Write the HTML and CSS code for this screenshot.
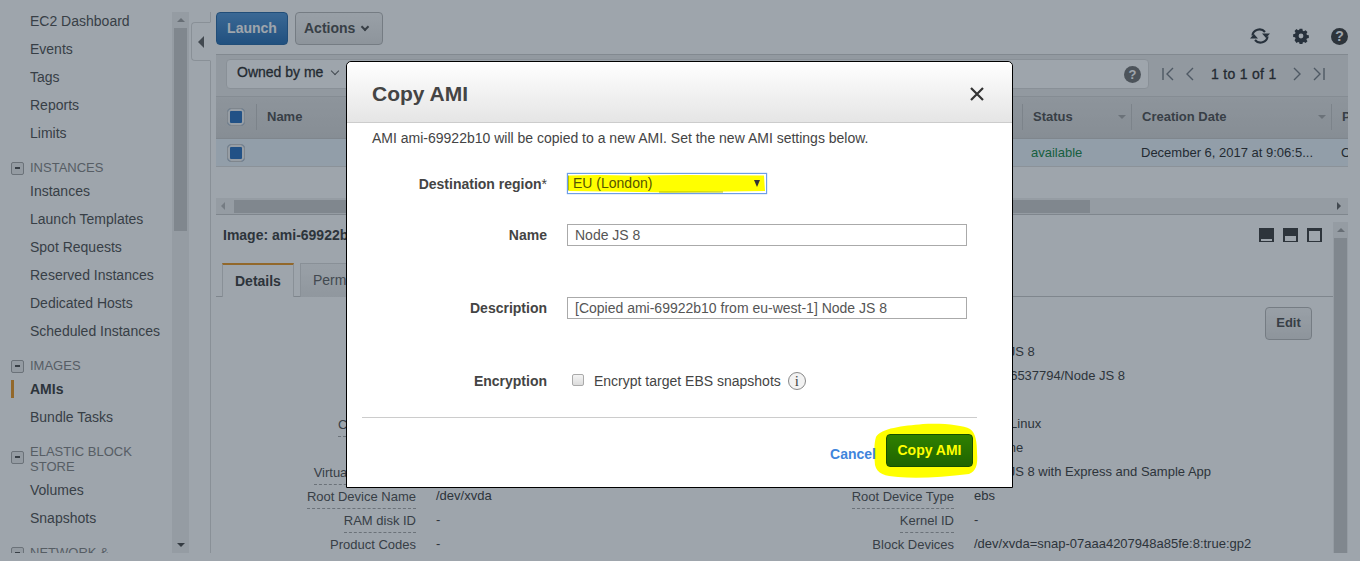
FILE: index.html
```html
<!DOCTYPE html>
<html lang="en">
<head>
    <meta charset="UTF-8">
    <meta name="viewport" content="width=device-width, initial-scale=1.0">
    <title>Copy AMI</title>
    <link rel="stylesheet" href="styles.css">
</head>
<body>
    <div class="console">
        <!-- left navigation -->
        <aside class="sidebar">
            <nav class="nav">
                <a class="nav-item">EC2 Dashboard</a>
                <a class="nav-item">Events</a>
                <a class="nav-item">Tags</a>
                <a class="nav-item">Reports</a>
                <a class="nav-item">Limits</a>
                <h3 class="nav-heading"><span class="nav-toggle"></span>INSTANCES</h3>
                <a class="nav-item">Instances</a>
                <a class="nav-item">Launch Templates</a>
                <a class="nav-item">Spot Requests</a>
                <a class="nav-item">Reserved Instances</a>
                <a class="nav-item">Dedicated Hosts</a>
                <a class="nav-item">Scheduled Instances</a>
                <h3 class="nav-heading"><span class="nav-toggle"></span>IMAGES</h3>
                <a class="nav-item active">AMIs</a>
                <a class="nav-item">Bundle Tasks</a>
                <h3 class="nav-heading"><span class="nav-toggle"></span>ELASTIC BLOCK STORE</h3>
                <a class="nav-item">Volumes</a>
                <a class="nav-item">Snapshots</a>
                <h3 class="nav-heading"><span class="nav-toggle"></span>NETWORK &amp; SECURITY</h3>
            </nav>
            <div class="vscroll vscroll-nav">
                <span class="arrow-up"></span>
                <span class="vscroll-thumb"></span>
                <span class="arrow-down"></span>
            </div>
        </aside>

        <div class="collapser">
            <div class="collapser-tab"><span class="arrow-left"></span></div>
        </div>

        <main class="main">
            <div class="toolbar">
                <button class="btn btn-primary">Launch</button>
                <button class="btn btn-actions">Actions <span class="caret"></span></button>
                <div class="toolbar-icons">
                    <svg class="icon-refresh" width="22" height="20" viewBox="0 0 22 20">
                        <path d="M3.500 9.500a7 6.500 0 0 1 12.500-3.500" fill="none" stroke="#3a3f45" stroke-width="2.200"/>
                        <path d="M18.500 10.500a7 6.500 0 0 1-12.500 3.500" fill="none" stroke="#3a3f45" stroke-width="2.200"/>
                        <path d="M13 7.500h8l-4 4.500zM9 12.500H1l4-4.500z" fill="#3a3f45"/>
                    </svg>
                    <svg class="icon-gear" width="16" height="16" viewBox="0 0 18 18">
                        <path fill="#3a3f45" fill-rule="evenodd" d="M7.300 0h3.400l.5 2.400 1.500.6 2-1.300 2.400 2.400-1.300 2 .6 1.500 2.400.5v3.400l-2.400.5-.6 1.500 1.300 2-2.400 2.400-2-1.300-1.500.6-.5 2.400H7.300l-.5-2.400-1.500-.6-2 1.300L.9 14.200l1.300-2-.6-1.500L-.8 10.200V6.800l2.400-.5.6-1.500-1.300-2L3.300 .4l2 1.300 1.500-.6zM9 6a3 3 0 1 0 0 6 3 3 0 0 0 0-6z" transform="translate(.9 .9) scale(.9)"/>
                    </svg>
                    <span class="help help-lg">?</span>
                </div>
            </div>

            <div class="filter-bar">
                <div class="search-box">
                    <span class="owned">Owned by me <span class="chevron"></span></span>
                    <span class="help help-sm">?</span>
                </div>
                <div class="pager">
                    <svg width="14" height="14" viewBox="0 0 14 14"><path d="M2 1v12M12 1L6 7l6 6" fill="none" stroke="#7b8187" stroke-width="1.400"/></svg>
                    <svg width="10" height="14" viewBox="0 0 10 14"><path d="M8 1L2 7l6 6" fill="none" stroke="#7b8187" stroke-width="1.400"/></svg>
                    <span class="pager-text">1 to 1 of 1</span>
                    <svg width="10" height="14" viewBox="0 0 10 14"><path d="M2 1l6 6-6 6" fill="none" stroke="#7b8187" stroke-width="1.400"/></svg>
                    <svg width="14" height="14" viewBox="0 0 14 14"><path d="M12 1v12M2 1l6 6-6 6" fill="none" stroke="#7b8187" stroke-width="1.400"/></svg>
                </div>
            </div>

            <div class="table">
                <div class="table-row table-head">
                    <div class="cell cell-check"><span class="checkbox"></span></div>
                    <div class="cell">Name</div>
                    <div class="cell">Status<span class="sort"></span></div>
                    <div class="cell">Creation Date<span class="sort"></span></div>
                    <div class="cell">Platform</div>
                </div>
                <div class="table-row table-selected">
                    <div class="cell cell-check"><span class="checkbox"></span></div>
                    <div class="cell"></div>
                    <div class="cell status-ok">available</div>
                    <div class="cell cell-wide">December 6, 2017 at 9:06:5...</div>
                    <div class="cell cell-wide">Other Linux</div>
                </div>
            </div>
            <div class="hscroll">
                <span class="arrow-left arrow-small"></span>
                <span class="hscroll-thumb"></span>
                <span class="arrow-right arrow-small"></span>
            </div>

            <section class="detail-pane">
                <div class="detail-content">
                    <div class="detail-title">
                        <strong>Image: ami-69922b10</strong>
                        <div class="pane-icons">
                            <span class="pane-icon pane-low"></span>
                            <span class="pane-icon pane-mid"></span>
                            <span class="pane-icon pane-high"></span>
                        </div>
                    </div>
                    <div class="tabs">
                        <span class="tab tab-active">Details</span>
                        <span class="tab">Permissions</span>
                    </div>
                    <div class="edit-row"><button class="btn btn-edit">Edit</button></div>
                    <div class="info-row"><span class="info-label"><i>AMI ID</i></span><span class="info-value">ami-69922b10</span><span class="info-label"><i>AMI Name</i></span><span class="info-value">Node JS 8</span></div>
                    <div class="info-row"><span class="info-label"><i>Owner</i></span><span class="info-value"></span><span class="info-label"><i>Source</i></span><span class="info-value">000006537794/Node JS 8</span></div>
                    <div class="info-row"><span class="info-label"><i>Status</i></span><span class="info-value"></span><span class="info-label"><i>State Reason</i></span><span class="info-value">-</span></div>
                    <div class="info-row"><span class="info-label"><i>Creation date</i></span><span class="info-value"></span><span class="info-label"><i>Platform</i></span><span class="info-value">Other Linux</span></div>
                    <div class="info-row"><span class="info-label"><i>Architecture</i></span><span class="info-value"></span><span class="info-label"><i>Image Type</i></span><span class="info-value">machine</span></div>
                    <div class="info-row"><span class="info-label"><i>Virtualization type</i></span><span class="info-value"></span><span class="info-label"><i>Description</i></span><span class="info-value">Node JS 8 with Express and Sample App</span></div>
                    <div class="info-row"><span class="info-label"><i>Root Device Name</i></span><span class="info-value">/dev/xvda</span><span class="info-label"><i>Root Device Type</i></span><span class="info-value">ebs</span></div>
                    <div class="info-row"><span class="info-label"><i>RAM disk ID</i></span><span class="info-value">-</span><span class="info-label"><i>Kernel ID</i></span><span class="info-value">-</span></div>
                    <div class="info-row"><span class="info-label"><i>Product Codes</i></span><span class="info-value">-</span><span class="info-label"><i>Block Devices</i></span><span class="info-value">/dev/xvda=snap-07aaa4207948a85fe:8:true:gp2</span></div>
                </div>
                <div class="vscroll vscroll-pane">
                    <span class="arrow-up"></span>
                    <span class="vscroll-thumb"></span>
                    <span class="arrow-down"></span>
                </div>
            </section>
        </main>
    </div>

    <div class="overlay"></div>

    <div class="modal">
        <div class="modal-header">
            <h2>Copy AMI</h2>
            <svg class="modal-close" width="16" height="16" viewBox="0 0 16 16"><path d="M2 2l12 12M14 2L2 14" fill="none" stroke="#333" stroke-width="2.200"/></svg>
        </div>
        <div class="modal-body">
            <p class="intro">AMI ami-69922b10 will be copied to a new AMI. Set the new AMI settings below.</p>
            <div class="form-row form-row-first">
                <label>Destination region<em>*</em></label>
                <div class="select">
                    <svg class="marker" width="198" height="19" viewBox="0 0 198 19">
                        <path d="M1 1.500L30 1L60 1.500L120 1L196 1.500L197 17L160 17.500L100 18.500L40 17.500L1 17z" fill="#ffff00"/>
                        <path d="M0 1.500h1v15H0zM91 17.500h64v1H91z" fill="#b4c000"/>
                    </svg>
                    <span class="select-value">EU (London)</span>
                    <span class="select-arrow"></span>
                </div>
            </div>
            <div class="form-row form-row-name">
                <label>Name</label>
                <input class="text-input" type="text" value="Node JS 8">
            </div>
            <div class="form-row form-row-desc">
                <label>Description</label>
                <input class="text-input" type="text" value="[Copied ami-69922b10 from eu-west-1] Node JS 8">
            </div>
            <div class="form-row form-row-enc">
                <label>Encryption</label>
                <div class="encrypt">
                    <span class="tick-box"></span>
                    <span>Encrypt target EBS snapshots</span>
                    <span class="info-icon">i</span>
                </div>
            </div>
        </div>
        <div class="modal-footer">
            <a class="cancel">Cancel</a>
            <div class="copy-wrap">
                <svg class="marker-blob" width="106" height="56" viewBox="0 0 106 56">
                    <path d="M3 14C8 5 30 3 50 1C70 0 90 2 97 6C103 10 104 20 104 30C105 42 103 48 96 51C70 54 45 56 25 54C12 53 4 51 2 42C1 30 1 20 3 14z" fill="#ffff00"/>
                </svg>
                <button class="btn-copy">Copy AMI</button>
            </div>
        </div>
    </div>
</body>
</html>
```

FILE: styles.css
```css
* {
    box-sizing: border-box;
}
html, body {
    height: 100%;
}
body {
    margin: 0;
    height: 561px;
    overflow: hidden;
    background-color: #ffffff;
    font-family: "Liberation Sans", Arial, sans-serif;
    font-size: 14px;
    color: #555;
}
.console {
    display: flex;
    height: 553px;
    padding-top: 12px;
    overflow: hidden;
}

/* sidebar */
.sidebar {
    display: flex;
    flex: none;
    width: 189px;
    height: 541px;
}
.nav {
    width: 172px;
    height: 541px;
    margin: 0;
    overflow: hidden;
}
.nav-item {
    display: block;
    height: 28px;
    line-height: 28px;
    padding-left: 30px;
    position: relative;
    top: -5px;
    color: #555;
}
.nav-item.active {
    font-weight: bold;
    color: #444;
}
.nav-item.active::before {
    content: "";
    position: absolute;
    left: 11px;
    top: 5px;
    width: 3px;
    height: 18px;
    background-color: #ec9a28;
}
.nav-heading {
    display: block;
    position: relative;
    top: -5px;
    margin: 0;
    padding: 13px 30px 2px 30px;
    font-size: 13px;
    line-height: 15px;
    font-weight: normal;
    color: #888;
}
.nav-toggle {
    position: absolute;
    left: 11px;
    top: 15px;
    width: 13px;
    height: 13px;
    border: 1px solid #aaa;
    border-radius: 2px;
    background-color: #eee;
}
.nav-toggle::after {
    content: "";
    position: absolute;
    left: 3px;
    top: 4px;
    width: 5px;
    height: 2px;
    background-color: #555;
}
.nav-heading:nth-last-of-type(2) .nav-toggle {
    top: 20px;
}

/* scrollbars */
.vscroll {
    display: flex;
    flex-direction: column;
    align-items: center;
    flex: none;
    width: 17px;
    background-color: #f1f1f1;
}
.vscroll-nav {
    height: 541px;
}
.vscroll-thumb {
    flex: none;
    width: 13px;
    height: 203px;
    margin-top: 6px;
    background-color: #cdcdcd;
}
.arrow-up, .arrow-down {
    flex: none;
    width: 0;
    height: 0;
    border-left: 4px solid transparent;
    border-right: 4px solid transparent;
}
.arrow-up {
    margin-top: 6px;
    border-bottom: 4px solid #a3a3a3;
}
.arrow-down {
    margin-top: auto;
    margin-bottom: 6px;
    border-top: 4px solid #505050;
}

/* collapse handle */
.collapser {
    flex: none;
    width: 22px;
    padding-left: 2px;
    border-right: 1px solid #ddd;
}
.collapser-tab {
    display: flex;
    align-items: center;
    justify-content: center;
    width: 20px;
    height: 39px;
    margin-top: 10px;
    background-color: #fff;
    border: 1px solid #ddd;
    border-right: 1px solid #fff;
    border-radius: 4px 0 0 4px;
}
.arrow-left {
    display: block;
    width: 0;
    height: 0;
    border-top: 6px solid transparent;
    border-bottom: 6px solid transparent;
    border-right: 6px solid #666;
}
.arrow-right {
    display: block;
    width: 0;
    height: 0;
    border-top: 4px solid transparent;
    border-bottom: 4px solid transparent;
    border-left: 4px solid #666;
}
.arrow-small {
    border-top-width: 4px;
    border-bottom-width: 4px;
    border-right-width: 4px;
    border-right-color: #bbb;
}

/* main column */
.main {
    flex: none;
    width: 1132px;
    height: 541px;
    margin-left: 5px;
    display: flex;
    flex-direction: column;
}
.toolbar {
    display: flex;
    align-items: flex-start;
    flex: none;
    height: 43px;
    border-bottom: 1px solid #d0d0d0;
}
.btn {
    height: 33px;
    padding: 0 0 2px;
    font-family: inherit;
    font-size: 14px;
    font-weight: bold;
    white-space: nowrap;
    border-radius: 4px;
    border: 1px solid #bbb;
    background: linear-gradient(#f7f7f7, #e4e4e4);
    color: #444;
}
.btn-primary {
    width: 72px;
    color: #fff;
    border-color: #2f6da8;
    background: linear-gradient(#5a9ad8, #2f72b4);
}
.btn-actions {
    width: 88px;
    margin-left: 7px;
    padding-left: 8px;
    text-align: left;
    color: #555;
}
.caret {
    display: inline-block;
    width: 6px;
    height: 6px;
    margin: 0 0 3px 3px;
    border-right: 2px solid #555;
    border-bottom: 2px solid #555;
    transform: rotate(45deg);
}
.toolbar-icons {
    display: flex;
    align-items: center;
    gap: 22px;
    margin: 14px 0 0 auto;
}
.help {
    display: inline-block;
    border-radius: 50%;
    background-color: #444;
    color: #fff;
    font-weight: bold;
    text-align: center;
}
.help-lg {
    width: 17px;
    height: 17px;
    line-height: 17px;
    font-size: 14px;
}
.help-sm {
    width: 17px;
    height: 17px;
    line-height: 17px;
    font-size: 13px;
    background-color: #777;
}

/* filter bar */
.filter-bar {
    display: flex;
    align-items: flex-start;
    flex: none;
    height: 42px;
    padding: 4px 0 0 10px;
    background-color: #ebebeb;
    border-bottom: 1px solid #d5d5d5;
}
.search-box {
    display: flex;
    align-items: center;
    justify-content: space-between;
    width: 923px;
    height: 30px;
    padding: 0 7px 0 10px;
    background-color: #fff;
    border: 1px solid #ddd;
    border-radius: 4px;
}
.owned {
    margin-bottom: 4px;
    color: #333;
    font-size: 14px;
    -webkit-text-stroke: .3px #333;
}
.chevron {
    display: inline-block;
    width: 6px;
    height: 6px;
    margin: 0 0 3px 5px;
    border-right: 1.500px solid #666;
    border-bottom: 1.500px solid #666;
    transform: rotate(45deg);
}
.pager {
    display: flex;
    align-items: center;
    gap: 10px;
    height: 30px;
    margin-left: 12px;
}
.pager-text {
    margin: 0 5px 0 6px;
    color: #333;
    letter-spacing: .3px;
    -webkit-text-stroke: .3px #333;
}

/* table */
.table {
    flex: none;
    height: 102px;
    overflow: hidden;
    font-size: 13px;
}
.table-row {
    display: grid;
    grid-template-columns: 40px 766px 109px 200px 1fr;
}
.table-head {
    height: 42px;
    align-items: center;
    padding-bottom: 1px;
    background: linear-gradient(#e4e4e4, #d8d8d8);
    border-bottom: 1px solid #ccc;
    font-weight: bold;
    color: #555;
}
.table-selected {
    height: 28px;
    align-items: center;
    background-color: #ebf4fb;
    border-bottom: 1px solid #e0e0e0;
    color: #333;
}
.cell {
    position: relative;
    padding-left: 10px;
    white-space: nowrap;
    overflow: hidden;
    line-height: 26px;
}
.status-ok {
    padding-left: 9px;
}
.table-head .cell {
    border-left: 1px solid #c6c6c6;
}
.table-head .cell-check {
    border-left: 0;
}
.table-row .cell-check {
    display: flex;
    align-items: center;
    padding-left: 11px;
}
.checkbox {
    display: block;
    width: 18px;
    height: 18px;
    border: 1px solid #ccc;
    border-radius: 4px;
    background-color: #2f74c0;
    box-shadow: inset 0 0 0 2px #f4f4f4;
}
.sort {
    position: absolute;
    right: 5px;
    top: 11px;
    border-left: 4px solid transparent;
    border-right: 4px solid transparent;
    border-top: 4px solid #aaa;
}
.status-ok {
    color: #1d8a4a;
}
.hscroll {
    display: flex;
    align-items: center;
    flex: none;
    height: 17px;
    padding: 0 5px;
    margin-top: -1px;
    background-color: #f1f1f1;
    border-bottom: 1px solid #ccc;
}
.hscroll-thumb {
    width: 856px;
    height: 13px;
    margin-left: 9px;
    background-color: #cdcdcd;
}
.hscroll .arrow-right {
    margin-left: auto;
    margin-right: 2px;
}

/* details */
.detail-pane {
    display: flex;
    flex: 1;
    min-height: 0;
}
.detail-content {
    flex: none;
    width: 1117px;
}
.vscroll-pane {
    width: 15px;
    margin-top: 7px;
}
.vscroll-pane .vscroll-thumb {
    height: 318px;
}
.detail-title {
    display: flex;
    align-items: center;
    justify-content: space-between;
    height: 38px;
    padding: 1px 11px 0 7px;
    font-size: 14px;
}
.detail-title strong {
    color: #444;
}
.pane-icons {
    display: flex;
    gap: 9px;
}
.pane-icon {
    display: block;
    width: 15px;
    height: 14px;
    background-color: #444;
    position: relative;
}
.pane-icon::after {
    content: "";
    position: absolute;
    left: 2px;
    right: 2px;
    background-color: #fff;
}
.pane-low::after {
    bottom: 1px;
    height: 2px;
}
.pane-mid::after {
    bottom: 1px;
    height: 5px;
}
.pane-high::after {
    bottom: 1px;
    top: 3px;
}
.tabs {
    display: flex;
    gap: 6px;
    height: 34px;
    margin-top: 10px;
    padding-left: 6px;
    border-bottom: 1px solid #ccc;
}
.tab {
    width: 110px;
    height: 34px;
    line-height: 32px;
    padding-left: 12px;
    border: 1px solid #ddd;
    border-bottom: 0;
    background: linear-gradient(#f7f7f7, #e8e8e8);
    color: #666;
}
.tab-active {
    width: 72px;
    background: #fff;
    border-top: 2px solid #ec9a28;
    font-weight: bold;
    color: #444;
}
.edit-row {
    display: flex;
    justify-content: flex-end;
    height: 32px;
    margin-top: 10px;
    padding-right: 21px;
}
.btn-edit {
    width: 47px;
    height: 33px;
    font-size: 13px;
    color: #555;
}
.info-row {
    display: grid;
    grid-template-columns: 200px 338px 200px 1fr;
    height: 24px;
    line-height: 24px;
    font-size: 13px;
    white-space: nowrap;
}
.edit-row + .info-row {
    margin-top: 2px;
}
.info-label {
    text-align: right;
}
.info-label i {
    display: inline-block;
    height: 22px;
    line-height: 20px;
    font-style: normal;
    border-bottom: 1px dashed #aaa;
}
.info-value {
    padding-left: 20px;
    color: #444;
    line-height: 22px;
}

/* modal */
.overlay {
    position: fixed;
    left: 0;
    top: 0;
    right: 0;
    bottom: 0;
    background-color: rgba(12, 30, 47, 0.4);
}
.modal {
    position: absolute;
    left: 346px;
    top: 61px;
    width: 667px;
    height: 427px;
    display: flex;
    flex-direction: column;
    background-color: #fff;
    border: 1px solid #000;
    border-radius: 5px 5px 0 0;
}
.modal-header {
    display: flex;
    align-items: center;
    justify-content: space-between;
    flex: none;
    height: 61px;
    padding: 4px 27px 0 25px;
    background: linear-gradient(#ffffff, #e5e5e5);
    border-bottom: 1px solid #ccc;
    border-radius: 5px 5px 0 0;
}
.modal-header h2 {
    margin: 0;
    font-size: 21px;
    color: #444;
}
.modal-body {
    flex: none;
    height: 294px;
    margin: 0 35px 0 25px;
    font-size: 14px;
    color: #444;
}
.intro {
    margin: 0;
    height: 30px;
    padding-top: 1px;
    line-height: 29px;
}
.form-row {
    display: grid;
    grid-template-columns: 175px 400px;
    column-gap: 20px;
    align-items: center;
}
.form-row label {
    text-align: right;
    font-weight: bold;
    color: #444;
}
.form-row em {
    font-style: normal;
    font-weight: normal;
}
.form-row-first {
    height: 20px;
    margin-top: 20px;
}
.form-row-name {
    height: 22px;
    margin-top: 31px;
}
.form-row-desc {
    height: 22px;
    margin-top: 51px;
}
.form-row-enc {
    height: 22px;
    margin-top: 51px;
}
.select {
    position: relative;
    align-self: start;
    width: 200px;
    height: 21px;
    border: 1px solid #6d9fe8;
    box-shadow: 0 0 1px #6d9fe8;
    overflow: hidden;
    line-height: 18px;
    padding-left: 5px;
}
.marker {
    position: absolute;
    left: 0;
    top: 0;
}
.select-value {
    position: relative;
    color: #555500;
}
.select-arrow {
    position: absolute;
    right: 6px;
    top: 6px;
    border-left: 3.500px solid transparent;
    border-right: 3.500px solid transparent;
    border-top: 7px solid #333;
}
.text-input {
    width: 400px;
    height: 22px;
    padding: 0 7px;
    font-family: inherit;
    font-size: 14px;
    color: #555;
    border: 1px solid #aaa;
    border-radius: 0;
    outline: 0;
}
.encrypt {
    display: flex;
    align-items: center;
    padding-left: 5px;
}
.tick-box {
    width: 12px;
    height: 12px;
    margin-right: 10px;
    margin-top: -3px;
    border: 1px solid #aaa;
    border-radius: 2px;
    background: linear-gradient(#f4f4f4, #dcdcdc);
}
.info-icon {
    width: 18px;
    height: 18px;
    margin-left: 7px;
    line-height: 16px;
    text-align: center;
    font-family: "Liberation Serif", serif;
    font-size: 15px;
    border: 1px solid #888;
    border-radius: 50%;
    background-color: #f2f2f2;
    color: #444;
}
.modal-footer {
    display: flex;
    align-items: flex-start;
    justify-content: flex-end;
    flex: 1;
    margin: 0 35px 0 15px;
    padding: 16px 4px 0 0;
    border-top: 1px solid #ccc;
}
.cancel {
    margin: 12px 10px 0 0;
    font-weight: bold;
    color: #3f85dc;
    position: relative;
    z-index: 1;
}
.copy-wrap {
    position: relative;
    width: 87px;
    height: 33px;
}
.marker-blob {
    position: absolute;
    left: -13px;
    top: -11px;
}
.btn-copy {
    position: relative;
    width: 87px;
    height: 33px;
    padding: 0 0 2px;
    font-family: inherit;
    font-size: 14px;
    font-weight: bold;
    color: #ffff00;
    border: 1px solid #174f00;
    border-radius: 4px;
    background: linear-gradient(#2f8000, #1f6400);
}
```
